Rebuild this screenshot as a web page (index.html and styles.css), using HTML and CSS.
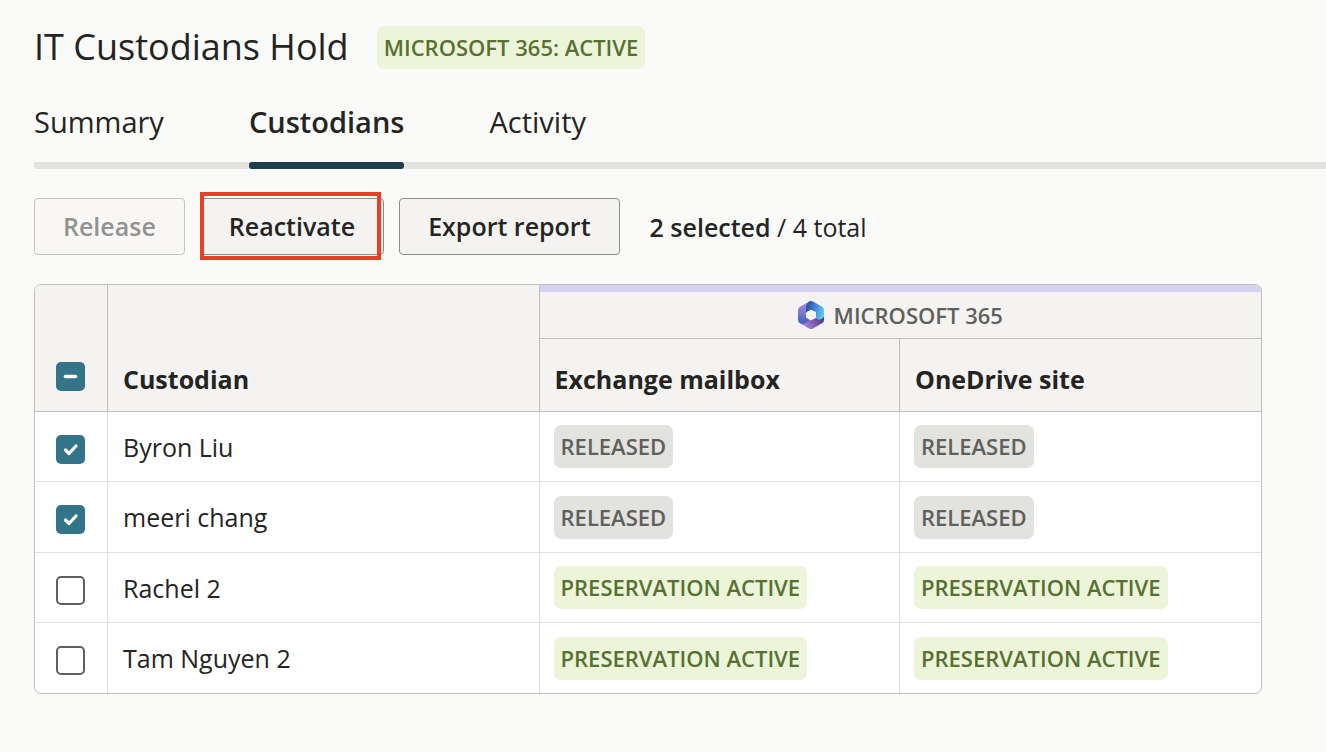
FILE: index.html
```html
<!DOCTYPE html>
<html lang="en">
<head>
<meta charset="utf-8">
<meta name="viewport" content="width=device-width, initial-scale=1">
<title>IT Custodians Hold</title>
<link rel="stylesheet" href="styles.css">
</head>
<body>
<main class="page">
  <header class="page-header">
    <h1 class="title">IT Custodians Hold</h1>
    <span class="badge badge-active">MICROSOFT 365: ACTIVE</span>
  </header>

  <nav class="tabs" aria-label="Hold sections">
    <a class="tab" href="#summary">Summary</a>
    <a class="tab tab-current" href="#custodians" aria-current="page">Custodians</a>
    <a class="tab" href="#activity">Activity</a>
  </nav>

  <div class="toolbar">
    <button class="button" type="button" disabled>Release</button>
    <div class="highlighted">
      <button class="button" type="button">Reactivate</button>
    </div>
    <button class="button" type="button">Export report</button>
    <p class="count"><strong>2 selected</strong> / 4 total</p>
  </div>

  <div class="card">
    <table class="custodians">
      <colgroup>
        <col class="col-select">
        <col class="col-name">
        <col class="col-mailbox">
        <col class="col-site">
      </colgroup>
      <thead>
        <tr class="group-row">
          <td class="spacer"></td>
          <td class="spacer"></td>
          <th class="group" colspan="2" scope="colgroup">
            <span class="group-label">
              <svg class="logo" viewBox="0 0 26 28" aria-hidden="true">
                <defs>
                  <linearGradient id="left" x1="0" y1="0" x2="0" y2="1">
                    <stop offset="0.1" stop-color="#a583da"/>
                    <stop offset="0.5" stop-color="#7a78d4"/>
                    <stop offset="0.9" stop-color="#3f62c4"/>
                  </linearGradient>
                  <linearGradient id="top" x1="0" y1="0.2" x2="1" y2="0.6">
                    <stop offset="0" stop-color="#2c469f"/>
                    <stop offset="0.45" stop-color="#3f82d2"/>
                    <stop offset="1" stop-color="#63cdf4"/>
                  </linearGradient>
                  <linearGradient id="bottom" x1="0" y1="0.7" x2="1" y2="0.3">
                    <stop offset="0" stop-color="#b78ae0"/>
                    <stop offset="0.5" stop-color="#8a62b6"/>
                    <stop offset="1" stop-color="#4c3888"/>
                  </linearGradient>
                  <clipPath id="hexagon">
                    <path d="M11 .6q2-1.200 4 0l9 5.200q2 1.200 2 3.500v9.400q0 2.300-2 3.500l-9 5.200q-2 1.200-4 0l-9-5.200q-2-1.200-2-3.500V9.300Q0 7 2 5.800z"/>
                  </clipPath>
                </defs>
                <g clip-path="url(#hexagon)">
                  <path fill="url(#left)" d="M0 0h13v16l-2 5-7 3H0z"/>
                  <path fill="url(#top)" d="M13-1Q8 2 8 7v5l5-3 5 2v8l8 3V-1z"/>
                  <path fill="url(#bottom)" d="M2 22.500q3 1 6-1l4.500-3 5.500-1.500 1 1q3.500 2 7-2V28H2z"/>
                </g>
                <path fill="#f4f3f2" d="M12 9.200q1-.6 2 0l3.200 1.900q.8.500.8 1.500v3q0 1-.8 1.500L14 19q-1 .6-2 0l-3.200-1.900Q8 16.600 8 15.600v-3q0-1 .8-1.500z"/>
              </svg>
              MICROSOFT 365
            </span>
          </th>
        </tr>
        <tr class="label-row">
          <th scope="col"><input class="check check-mixed" type="checkbox" aria-checked="mixed" aria-label="Select all custodians"></th>
          <th scope="col">Custodian</th>
          <th scope="col">Exchange mailbox</th>
          <th scope="col">OneDrive site</th>
        </tr>
      </thead>
      <tbody>
        <tr>
          <td><input class="check" type="checkbox" id="c1" checked></td>
          <td class="name"><label for="c1">Byron Liu</label></td>
          <td><span class="badge badge-released">RELEASED</span></td>
          <td><span class="badge badge-released">RELEASED</span></td>
        </tr>
        <tr>
          <td><input class="check" type="checkbox" id="c2" checked></td>
          <td class="name"><label for="c2">meeri chang</label></td>
          <td><span class="badge badge-released">RELEASED</span></td>
          <td><span class="badge badge-released">RELEASED</span></td>
        </tr>
        <tr>
          <td><input class="check" type="checkbox" id="c3"></td>
          <td class="name"><label for="c3">Rachel 2</label></td>
          <td><span class="badge badge-active">PRESERVATION ACTIVE</span></td>
          <td><span class="badge badge-active">PRESERVATION ACTIVE</span></td>
        </tr>
        <tr>
          <td><input class="check" type="checkbox" id="c4"></td>
          <td class="name"><label for="c4">Tam Nguyen 2</label></td>
          <td><span class="badge badge-active">PRESERVATION ACTIVE</span></td>
          <td><span class="badge badge-active">PRESERVATION ACTIVE</span></td>
        </tr>
      </tbody>
    </table>
  </div>
</main>
</body>
</html>
```

FILE: styles.css
```css
* {
  box-sizing: border-box;
}

body {
  margin: 0;
  background: #fafaf8;
  color: #242422;
  font-family: "Open Sans", sans-serif;
  font-size: 25px;
  line-height: 36px;
}

.page {
  padding: 24px 0 24px 34px;
}

.page-header {
  display: flex;
  align-items: center;
  gap: 28px;
}

.title {
  margin: 0;
  font-size: 36px;
  font-weight: 400;
  line-height: 46px;
}

.badge {
  display: block;
  width: max-content;
  padding: 4px 7px;
  border-radius: 7px;
  font-size: 22px;
  font-weight: 600;
  line-height: 35px;
}

.badge-active {
  background: #ecf5da;
  color: #587130;
}

.badge-released {
  background: #e2e2de;
  color: #5f5f5b;
}

.tabs {
  display: flex;
  gap: 85px;
  margin-top: 32px;
  background: linear-gradient(#e2e2de, #e2e2de) bottom / 100% 7px no-repeat;
  border-radius: 3px 0 0 3px;
}

.tab {
  position: relative;
  padding-bottom: 28px;
  color: inherit;
  font-size: 29px;
  line-height: 39px;
  text-decoration: none;
}

.tab-current {
  font-weight: 600;
}

.tab-current::after {
  content: "";
  position: absolute;
  inset: auto 0 0;
  height: 7px;
  border-radius: 3px;
  background: #1b404c;
}

.toolbar {
  display: flex;
  align-items: center;
  gap: 15px;
  margin-top: 29px;
}

.button {
  padding: 9px 28px;
  border: 1px solid #8d8d89;
  border-radius: 4px;
  background: #f4f3f2;
  color: inherit;
  font: inherit;
  font-weight: 600;
  line-height: 37px;
}

.button:disabled {
  border-color: #c3c3bf;
  background: #f8f7f6;
  color: #929290;
}

.highlighted {
  position: relative;
}

.highlighted::after {
  content: "";
  position: absolute;
  inset: -6px 3px -5px 0;
  border: 4px solid #e84025;
  pointer-events: none;
}

.count {
  margin: 0 0 0 15px;
}

.count strong {
  font-weight: 600;
}

.card {
  margin: 29px 64px 0 0;
  overflow: hidden;
  border: 1px solid #bfbfbb;
  border-radius: 7px;
  background: #fff;
}

.custodians {
  width: 100%;
  border-spacing: 0;
  table-layout: fixed;
}

.col-select {
  width: 73px;
}

.col-name {
  width: 35.2%;
}

.col-mailbox {
  width: 29.4%;
}

.custodians th,
.custodians td {
  padding: 0 14px;
  border: 0 solid #e1e1de;
  border-width: 0 1px 1px 0;
  text-align: left;
}

.custodians th:last-child,
.custodians td:last-child {
  border-right: 0;
}

.custodians tbody tr:last-child td {
  border-bottom: 0;
}

.custodians tbody td {
  height: 70px;
}

.custodians tbody tr:nth-child(2) td {
  height: 71px;
}

.custodians thead th,
.custodians thead td {
  border-color: #bfbfbb;
  background: #f4f3f2;
}

.custodians .group-row > * {
  height: 54px;
}

.custodians .spacer {
  border-bottom: 0;
}

.custodians .group {
  padding: 0;
  border-top: 7px solid #d3d3f0;
}

.group-label {
  display: flex;
  align-items: center;
  justify-content: center;
  gap: 10px;
  color: #5f5f5b;
  font-size: 22px;
  font-weight: 600;
  line-height: 34px;
}

.logo {
  width: 26px;
  height: 28px;
}

.custodians .name {
  padding-left: 15px;
}

.custodians .label-row th {
  height: 73px;
  padding: 8px 15px 0;
  font-weight: 700;
}

.custodians tr > :first-child,
.custodians .label-row th:first-child {
  padding-left: 0;
  padding-right: 0;
}

.check {
  display: block;
  width: 29px;
  height: 29px;
  margin: 5px 0 0 21px;
  border: 2px solid #5f5f5b;
  border-radius: 5px;
  appearance: none;
  background: #fff;
}

.label-row .check {
  margin: 0 0 5px 21px;
}

.check:checked,
.check-mixed {
  border: 0;
  background: #337488 url("data:image/svg+xml,%3Csvg xmlns='http://www.w3.org/2000/svg' viewBox='0 0 29 29'%3E%3Cpath d='M9.500 15l3.500 3.500 7-7.500' fill='none' stroke='white' stroke-width='3.200' stroke-linecap='round' stroke-linejoin='round'/%3E%3C/svg%3E");
}

.check-mixed {
  background-image: url("data:image/svg+xml,%3Csvg xmlns='http://www.w3.org/2000/svg' viewBox='0 0 29 29'%3E%3Cpath d='M9.500 14.500h10' stroke='white' stroke-width='3.600' stroke-linecap='round'/%3E%3C/svg%3E");
}
```
